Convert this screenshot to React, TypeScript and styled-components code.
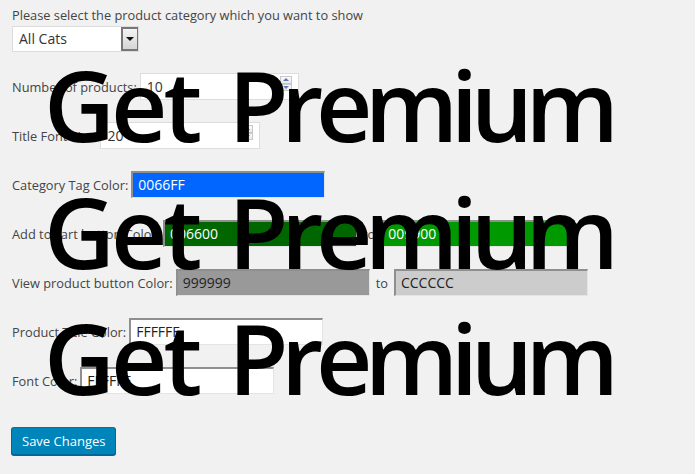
import React from 'react';
import styled, { createGlobalStyle } from 'styled-components';

const GlobalStyle = createGlobalStyle`
  html, body {
    margin: 0;
    padding: 0;
    background: #f1f1f1;
  }
  body {
    font-family: "Open Sans", "Noto Sans", sans-serif;
    font-size: 12.8px;
    color: #444;
  }
`;

const Page = styled.div`
  position: relative;
  width: 695px;
  height: 474px;
  overflow: hidden;
  padding: 6px 0 0 12px;
  box-sizing: border-box;
`;

const Intro = styled.div`
  line-height: 18px;
  height: 20px;
`;

const Select = styled.div`
  display: flex;
  width: 127px;
  height: 26px;
  box-sizing: border-box;
  background: #fff;
  border: 1px solid #dcdcdc;
  font-size: 14px;
  color: #333;
`;

const SelectValue = styled.div`
  flex: 1;
  padding-left: 6px;
  line-height: 24px;
`;

const SelectArrow = styled.div`
  width: 17px;
  box-sizing: border-box;
  border: 2px solid #777;
  border-right-width: 1px;
  background: linear-gradient(#f4f4f4, #d6d6d6);
  display: flex;
  align-items: center;
  justify-content: center;
  &::after {
    content: '';
    border-left: 4px solid transparent;
    border-right: 4px solid transparent;
    border-top: 4px solid #111;
  }
`;

const Rows = styled.div`
  display: flex;
  flex-direction: column;
  gap: 22px;
  margin-top: 21px;
`;

const Row = styled.div`
  display: flex;
  align-items: center;
  height: 27px;
  white-space: nowrap;
`;

const Label = styled.span`
  margin-right: 3px;
`;

const To = styled.span`
  margin: 0 6px;
`;

const NumberBox = styled.div<{ $w: number }>`
  display: flex;
  align-items: center;
  width: ${(p) => p.$w}px;
  height: 27px;
  box-sizing: border-box;
  background: #fff;
  border: 1px solid #ddd;
  padding: 0 6px 0 6px;
  font-size: 14px;
  color: #333;
`;

const NumberValue = styled.span`
  flex: 1;
`;

const Spin = styled.div`
  display: flex;
  flex-direction: column;
  width: 12px;
  height: 15px;
  margin-top: -6px;
`;

const SpinHalf = styled.div<{ $up?: boolean }>`
  flex: 1;
  border: 1px solid #c8c8c8;
  background: linear-gradient(#fafafa, #e8e8e8);
  display: flex;
  align-items: center;
  justify-content: center;
  &::after {
    content: '';
    border-left: 3px solid transparent;
    border-right: 3px solid transparent;
    ${(p) => (p.$up ? 'border-bottom: 3px solid #5a7bb5;' : 'border-top: 3px solid #5a7bb5;')}
  }
`;

const ColorBox = styled.div<{ $bg: string; $fg: string }>`
  width: 194px;
  height: 27px;
  box-sizing: border-box;
  background: ${(p) => p.$bg};
  color: ${(p) => p.$fg};
  border-top: 2px solid #8f8f8f;
  border-left: 2px solid #8f8f8f;
  border-right: 1px solid #e4e4e4;
  border-bottom: 1px solid #e4e4e4;
  padding-left: 5px;
  font-size: 14px;
  line-height: 24px;
`;

const SaveButton = styled.button`
  margin-top: 33px;
  margin-left: -1px;
  height: 28px;
  padding: 0 10px 1px;
  background: #0085ba;
  border: 1px solid;
  border-color: #0073aa #006799 #006799;
  box-shadow: 0 1px 0 #006799;
  border-radius: 3px;
  color: #fff;
  font-family: "Open Sans", "Noto Sans", sans-serif;
  font-size: 13px;
  cursor: pointer;
`;

const Watermark = styled.div`
  position: absolute;
  left: 44px;
  top: 41px;
  display: flex;
  flex-direction: column;
  font-family: "Open Sans", "Noto Sans", sans-serif;
  font-size: 98px;
  font-weight: 600;
  line-height: 126.5px;
  color: #000;
  white-space: nowrap;
  pointer-events: none;
`;

const WatermarkLine = styled.div`
  display: flex;
  gap: 30px;
`;

const Word = styled.span<{ $spacing: number }>`
  letter-spacing: ${(p) => p.$spacing}px;
`;

const Spinner = () => (
  <Spin>
    <SpinHalf $up />
    <SpinHalf />
  </Spin>
);

const PremiumLine = () => (
  <WatermarkLine>
    <Word $spacing={-4}>Get</Word>
    <Word $spacing={-7.5}>Premium</Word>
  </WatermarkLine>
);

export default function App() {
  return (
    <Page>
      <GlobalStyle />
      <Intro>Please select the product category which you want to show</Intro>
      <Select>
        <SelectValue>All Cats</SelectValue>
        <SelectArrow />
      </Select>
      <Rows>
        <Row>
          <Label>Number of products:</Label>
          <NumberBox $w={159}>
            <NumberValue>10</NumberValue>
            <Spinner />
          </NumberBox>
        </Row>
        <Row>
          <Label>Title Font Size:</Label>
          <NumberBox $w={160}>
            <NumberValue>20</NumberValue>
            <Spinner />
          </NumberBox>
        </Row>
        <Row>
          <Label>Category Tag Color:</Label>
          <ColorBox $bg="#0066ff" $fg="#fff">0066FF</ColorBox>
        </Row>
        <Row>
          <Label>Add to cart button Color:</Label>
          <ColorBox $bg="#006600" $fg="#fff">006600</ColorBox>
          <To>to</To>
          <ColorBox $bg="#009900" $fg="#fff">009900</ColorBox>
        </Row>
        <Row>
          <Label>View product button Color:</Label>
          <ColorBox $bg="#999999" $fg="#222">999999</ColorBox>
          <To>to</To>
          <ColorBox $bg="#cccccc" $fg="#222">CCCCCC</ColorBox>
        </Row>
        <Row>
          <Label>Product Title Color:</Label>
          <ColorBox $bg="#ffffff" $fg="#222">FFFFFF</ColorBox>
        </Row>
        <Row>
          <Label>Font Color:</Label>
          <ColorBox $bg="#ffffff" $fg="#222">FFFFFF</ColorBox>
        </Row>
      </Rows>
      <SaveButton>Save Changes</SaveButton>
      <Watermark>
        <PremiumLine />
        <PremiumLine />
        <PremiumLine />
      </Watermark>
    </Page>
  );
}
